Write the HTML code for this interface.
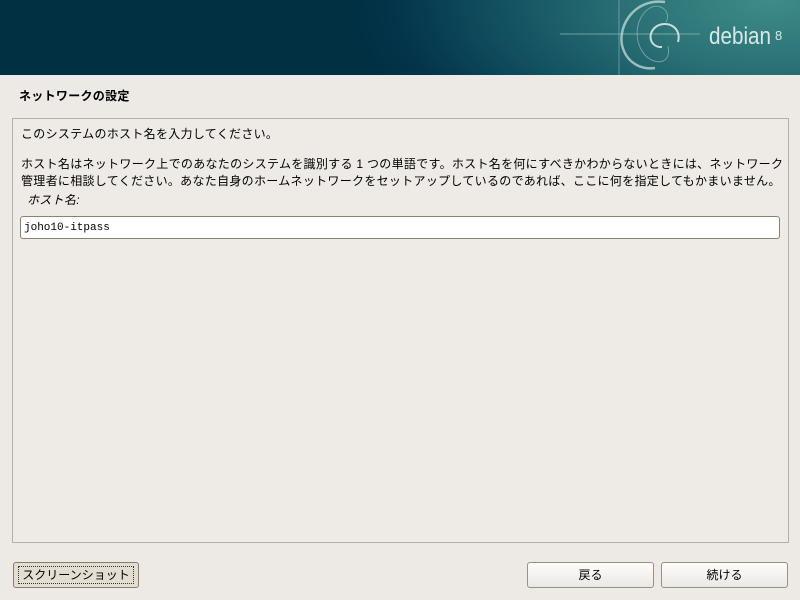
<!DOCTYPE html>
<html><head><meta charset="utf-8"><style>
body{margin:0;width:800px;height:600px;background:#edeae5;font-family:"Liberation Sans","Noto Sans CJK JP",sans-serif;font-size:12px;color:#000;position:relative;overflow:hidden}
#hdr{position:absolute;left:0;top:0;width:800px;height:75px;background:radial-gradient(ellipse 420px 200px at 770px 0px,#3e8c89 0%,#2a7074 35%,#125060 65%,#03344a 90%,#003042 100%),#003042}
#box{position:absolute;left:12px;top:118px;width:775px;height:423px;border:1px solid #bcae9e;background:#eeebe6}
.t{position:absolute;white-space:nowrap;letter-spacing:.3px}
#inp{position:absolute;left:20px;top:216px;width:758px;height:21px;border:1px solid #8c8070;border-radius:3px;background:#fff;font-family:"Liberation Mono","Noto Sans CJK JP",monospace;font-size:11px;line-height:23px;text-indent:3px}
.btn{position:absolute;top:562px;height:24px;border:1px solid #9c9080;border-radius:3px;background:linear-gradient(#fdfdfc,#ebe8e3);text-align:center;line-height:24px;font-size:12px}
</style></head><body>
<div id="hdr">
<svg width="800" height="75" style="position:absolute;left:0;top:0">
<line x1="560" y1="34" x2="700" y2="34" stroke="#a8c8c8" stroke-width="1" opacity=".6"/>
<line x1="619" y1="0" x2="619" y2="75" stroke="#a8c8c8" stroke-width="1" opacity=".5"/>
<path d="M665 2 C635 -2 618 25 622 45 C626 62 640 70 655 68" fill="none" stroke="#b8d4d4" stroke-width="2.5" opacity=".8"/>
<path d="M666 22 C672 12 660 2 650 8 C636 16 632 40 645 55 C655 66 672 64 668 46" fill="none" stroke="#a0c4c4" stroke-width="1" opacity=".6"/>
<path d="M678 42 C682 28 668 20 657 26 C646 33 650 48 662 47" fill="none" stroke="#d8eaea" stroke-width="2" opacity=".9"/>
<text x="709" y="44" font-family="Liberation Sans,sans-serif" font-size="24" fill="#d8e8e8" textLength="62" lengthAdjust="spacingAndGlyphs">debian</text>
<text x="775" y="40" font-family="Liberation Sans,sans-serif" font-size="13" fill="#d8e8e8">8</text>
</svg>
</div>
<div class="t" style="left:19px;top:87px;font-weight:bold">ネットワークの設定</div>
<div id="box"></div>
<div class="t" style="left:21px;top:125px">このシステムのホスト名を入力してください。</div>
<div class="t" style="left:21px;top:155px">ホスト名はネットワーク上でのあなたのシステムを識別する 1 つの単語です。ホスト名を何にすべきかわからないときには、ネットワーク</div>
<div class="t" style="left:21px;top:172px">管理者に相談してください。あなた自身のホームネットワークをセットアップしているのであれば、ここに何を指定してもかまいません。</div>
<div class="t" style="left:27px;top:191px;font-style:italic">ホスト名:</div>
<div id="inp">joho10-itpass</div>
<div class="btn" style="left:13px;width:124px;background:#e4ddd2;border-color:#8c7c6c"><span style="border:1px dotted #333;padding:1px 3px">スクリーンショット</span></div>
<div class="btn" style="left:527px;width:125px">戻る</div>
<div class="btn" style="left:661px;width:125px">続ける</div>
</body></html>
